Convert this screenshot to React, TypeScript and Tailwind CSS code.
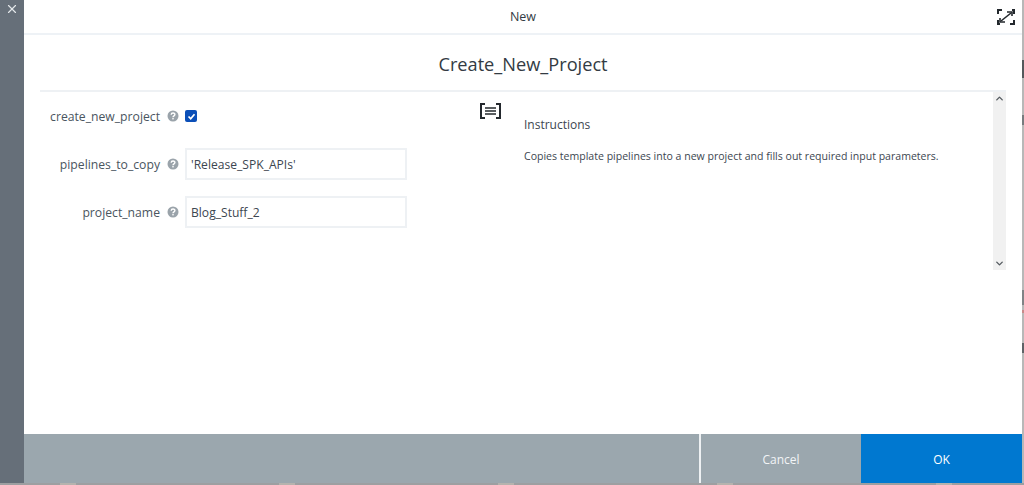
import { ChevronDown, ChevronUp, X } from "lucide-react";

const fontFamily = "font-['Open_Sans','Noto_Sans',sans-serif]";

function HelpIcon() {
  return (
    <svg width="12" height="12" viewBox="0 0 12 12" className="shrink-0">
      <circle cx="6" cy="6" r="5.5" fill="#9aa3aa" />
      <path d="M4.2 4.7 C4.2 2.5 7.9 2.5 7.9 4.6 C7.9 5.9 6 5.9 6 7.2" fill="none" stroke="#fff" strokeWidth="1.4" />
      <rect x="5.3" y="8" width="1.4" height="1.4" fill="#fff" />
    </svg>
  );
}

function ExpandIcon() {
  return (
    <svg width="18" height="16" viewBox="0 0 18 16" fill="none" stroke="#23282d" strokeWidth="2">
      <path d="M1 5V1h4" />
      <path d="M17 11v4h-4" />
      <path d="M1 11v4h2" />
      <path d="M17 5V1h-2" />
      <path d="M4 12 14 4" strokeWidth="1.6" />
      <path d="M10 3h5v4" strokeWidth="1.6" />
      <path d="M3 9v4h5" strokeWidth="1.6" />
    </svg>
  );
}

function NotesIcon() {
  return (
    <svg width="21" height="16" viewBox="0 0 21 16" fill="none" stroke="#23282d" strokeWidth="2">
      <path d="M5 1H1v14h4" />
      <path d="M16 1h4v14h-4" />
      <path d="M5 5h11M5 8h11M5 11h11" strokeWidth="1.4" />
    </svg>
  );
}

function Field({ label, value }: { label: string; value: string }) {
  return (
    <div className="flex items-center h-[32px]">
      <div className="w-[120px] text-right text-[12.2px] leading-none text-[#4a5560] pt-[2px]">{label}</div>
      <div className="w-[25px] flex justify-center">
        <HelpIcon />
      </div>
      <div className="w-[222px] h-[32px] border-2 border-[#eef1f4] pl-[4px] pt-[3px] flex items-center text-[12.1px] text-[#3c4650]">
        {value}
      </div>
    </div>
  );
}

export default function App() {
  return (
    <div className={`flex flex-col w-[1024px] h-[485px] overflow-hidden bg-[#9d9fa1] ${fontFamily}`}>
      <div className="flex h-[483px] shrink-0">
        <div className="w-[24px] bg-[#666f79] flex justify-center pt-[2px] text-[#e4e7ea]">
          <X size={14} strokeWidth={2} />
        </div>

        <div className="w-[998px] flex flex-col bg-white">
          <div className="h-[35px] shrink-0 border-b-2 border-[#eef2f6] flex items-center relative">
            <div className="w-full text-center text-[12.5px] text-[#333b43] pt-[2px]">New</div>
            <div className="absolute right-[7px] top-[9px]">
              <ExpandIcon />
            </div>
          </div>

          <div className="h-[55px] shrink-0 flex items-center justify-center text-[18.2px] text-[#333b43] pt-[5px]">
            Create_New_Project
          </div>

          <div className="ml-[16px] mr-[16px] h-[180px] shrink-0 border-t-2 border-[#eef1f4] flex">
            <div className="w-[440px] shrink-0 relative">
              <div className="flex items-center h-[20px] mt-[14px] mb-[22px]">
                <div className="w-[120px] text-right text-[12.2px] leading-none text-[#4a5560] pt-[2px]">create_new_project</div>
                <div className="w-[25px] flex justify-center">
                  <HelpIcon />
                </div>
                <div className="w-[12px] h-[12px] rounded-[2px] bg-[#0b4fb8] flex items-center justify-center">
                  <svg width="9" height="9" viewBox="0 0 9 9" fill="none" stroke="#fff" strokeWidth="1.7">
                    <path d="M1.5 4.5 3.7 6.7 7.5 2.2" />
                  </svg>
                </div>
              </div>
              <div className="flex flex-col gap-[16px]">
                <Field label="pipelines_to_copy" value="'Release_SPK_APIs'" />
                <Field label="project_name" value="Blog_Stuff_2" />
              </div>
              <div className="absolute left-[440px] top-[11px]">
                <NotesIcon />
              </div>
            </div>

            <div className="flex-1 pl-[44px] pt-[25px]">
              <div className="text-[12px] leading-[16px] text-[#3c4650]">Instructions</div>
              <div className="text-[10.55px] leading-[14px] mt-[16px] text-[#3c4650]">
                Copies template pipelines into a new project and fills out required input parameters.
              </div>
            </div>

            <div className="w-[13px] shrink-0 bg-[#f1f1f1] flex flex-col justify-between items-center py-[1px] text-[#555b60]">
              <ChevronUp size={11} strokeWidth={3} />
              <ChevronDown size={11} strokeWidth={3} />
            </div>
          </div>

          <div className="flex-1" />

          <div className="h-[49px] shrink-0 bg-[#9ba7ae] flex justify-end text-[12px] text-[#f2f4f6]">
            <div className="w-[162px] border-l-2 border-[#eef1f3] flex items-center justify-center pt-[2px]">Cancel</div>
            <div className="w-[161px] bg-[#0078d0] text-white flex items-center justify-center pt-[2px]">OK</div>
          </div>
        </div>

        <div className="flex-1 flex flex-col bg-[#b8b8b8]">
          <div className="h-[60px]" />
          <div className="h-[18px] bg-[#55595c]" />
          <div className="h-[37px]" />
          <div className="h-[10px] bg-[#777b7e]" />
          <div className="h-[165px]" />
          <div className="h-[15px] bg-[#808386]" />
          <div className="h-[5px]" />
          <div className="h-[3px] bg-[#c98a8a]" />
          <div className="h-[30px]" />
          <div className="h-[10px] bg-[#5e6266]" />
        </div>
      </div>

      <div className="h-[2px] shrink-0 pl-[60px] flex gap-[203px]">
        <div className="w-[16px] bg-[#b5b3ae]" />
        <div className="w-[16px] bg-[#b5b3ae]" />
        <div className="w-[16px] bg-[#b5b3ae]" />
        <div className="w-[16px] bg-[#b5b3ae]" />
        <div className="w-[16px] bg-[#b5b3ae]" />
      </div>
    </div>
  );
}
